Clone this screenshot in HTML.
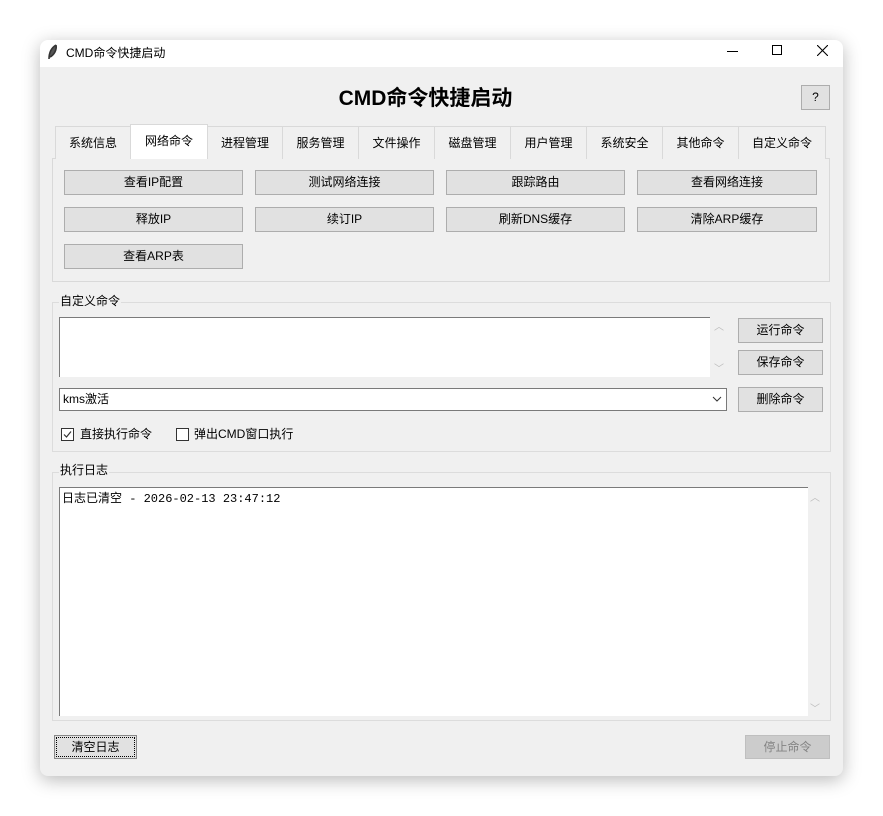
<!DOCTYPE html>
<html><head><meta charset="utf-8"><style>
*{box-sizing:border-box;margin:0;padding:0}
body{width:883px;height:816px;background:#fff;position:relative;overflow:hidden;font-family:"Liberation Sans","Noto Sans CJK SC",sans-serif;font-size:12px;color:#000}
.a{position:absolute}
.win{left:40px;top:40px;width:803px;height:736px;background:#f0f0f0;border-radius:8px;box-shadow:0 4px 18px rgba(0,0,0,.28);overflow:hidden}
.btn{position:absolute;background:#e1e1e1;border:1px solid #adadad;text-align:center;font-size:12px;line-height:22px}
.tab{position:absolute;top:126px;height:33px;border:1px solid #d9d9d9;border-bottom:none;background:#f0f0f0;text-align:center;line-height:33px;font-size:12px}
.grp{position:absolute;border:1px solid #dcdcdc}
.lbl{position:absolute;background:#f0f0f0;font-size:12px;padding:0 1px;line-height:14px}
.box{position:absolute;background:#fff;border:1px solid #7a7a7a}
.cb{position:absolute;width:13px;height:13px;border:1px solid #333;background:#fff}
.arr{position:absolute;color:#bbb;font-size:10px}
</style></head><body>
<div class="a win"></div>
<div class="a" style="left:40px;top:40px;width:803px;height:27px;background:#fff;border-radius:8px 8px 0 0"></div>
<svg class="a" style="left:46px;top:44px" width="14" height="16"><path d="M10 1 C5 4 3 9 3 15 M10 1 C11 6 8 11 4 13" stroke="#333" stroke-width="1.6" fill="#555"/></svg>
<div class="a" style="left:66px;top:44px;font-size:12px">CMD命令快捷启动</div>
<div class="a" style="left:727px;top:51px;width:11px;height:1px;background:#000"></div>
<div class="a" style="left:772px;top:45px;width:10px;height:10px;border:1px solid #000"></div>
<svg class="a" style="left:817px;top:45px" width="11" height="11"><path d="M0 0L11 11M11 0L0 11" stroke="#000" stroke-width="1.1"/></svg>

<div class="a" style="left:0;top:85px;width:851px;text-align:center;font-size:21px;font-weight:bold;line-height:28px">CMD命令快捷启动</div>
<div class="btn" style="left:801px;top:85px;width:29px;height:25px;line-height:23px">?</div>

<div class="a" style="left:52px;top:158px;width:778px;height:124px;border:1px solid #d9d9d9;background:#f0f0f0"></div>
<div class="tab" style="left:55px;width:76px">系统信息</div>
<div class="tab" style="left:130px;width:78px;top:124px;height:35px;background:#fff;line-height:33px">网络命令</div>
<div class="tab" style="left:207px;width:76px">进程管理</div>
<div class="tab" style="left:282px;width:77px">服务管理</div>
<div class="tab" style="left:358px;width:77px">文件操作</div>
<div class="tab" style="left:434px;width:77px">磁盘管理</div>
<div class="tab" style="left:510px;width:77px">用户管理</div>
<div class="tab" style="left:586px;width:77px">系统安全</div>
<div class="tab" style="left:662px;width:77px">其他命令</div>
<div class="tab" style="left:738px;width:88px">自定义命令</div>

<div class="btn" style="left:64px;top:170px;width:179px;height:25px">查看IP配置</div>
<div class="btn" style="left:255px;top:170px;width:179px;height:25px">测试网络连接</div>
<div class="btn" style="left:446px;top:170px;width:179px;height:25px">跟踪路由</div>
<div class="btn" style="left:637px;top:170px;width:180px;height:25px">查看网络连接</div>
<div class="btn" style="left:64px;top:207px;width:179px;height:25px">释放IP</div>
<div class="btn" style="left:255px;top:207px;width:179px;height:25px">续订IP</div>
<div class="btn" style="left:446px;top:207px;width:179px;height:25px">刷新DNS缓存</div>
<div class="btn" style="left:637px;top:207px;width:180px;height:25px">清除ARP缓存</div>
<div class="btn" style="left:64px;top:244px;width:179px;height:25px">查看ARP表</div>

<div class="grp" style="left:52px;top:302px;width:779px;height:150px"></div>
<div class="lbl" style="left:59px;top:294px">自定义命令</div>
<div class="box" style="left:59px;top:317px;width:651px;height:60px;border-bottom:none;border-right:none"></div>
<div class="arr" style="left:714px;top:318px">︿</div>
<div class="arr" style="left:714px;top:360px">﹀</div>
<div class="btn" style="left:738px;top:318px;width:85px;height:25px">运行命令</div>
<div class="btn" style="left:738px;top:350px;width:85px;height:25px">保存命令</div>
<div class="btn" style="left:738px;top:387px;width:85px;height:25px">删除命令</div>
<div class="box" style="left:59px;top:388px;width:668px;height:23px;padding-left:3px;line-height:21px">kms激活</div>
<svg class="a" style="left:712px;top:396px" width="10" height="6"><path d="M1 1L5 5L9 1" stroke="#333" fill="none"/></svg>
<div class="cb" style="left:61px;top:428px"></div>
<svg class="a" style="left:62px;top:429px" width="11" height="11"><path d="M2 5.5L4.5 8L9 2.5" stroke="#333" stroke-width="1.2" fill="none"/></svg>
<div class="a" style="left:80px;top:426px;line-height:16px">直接执行命令</div>
<div class="cb" style="left:176px;top:428px"></div>
<div class="a" style="left:194px;top:426px;line-height:16px">弹出CMD窗口执行</div>

<div class="grp" style="left:52px;top:472px;width:779px;height:249px"></div>
<div class="lbl" style="left:59px;top:463px">执行日志</div>
<div class="box" style="left:59px;top:487px;width:749px;height:229px;border-bottom:none;border-right:none;padding:1px 2px;font-family:'Liberation Mono','Noto Sans CJK SC',monospace;font-size:12px">日志已清空 - 2026-02-13 23:47:12</div>
<div class="arr" style="left:810px;top:489px">︿</div>
<div class="arr" style="left:810px;top:700px">﹀</div>

<div class="btn" style="left:54px;top:735px;width:83px;height:24px;border-color:#888"><div style="position:absolute;left:1px;top:1px;right:1px;bottom:1px;border:1px dotted #000"></div>清空日志</div>
<div class="btn" style="left:745px;top:735px;width:85px;height:24px;background:#ccc;border-color:#bfbfbf;color:#838383">停止命令</div>
</body></html>
